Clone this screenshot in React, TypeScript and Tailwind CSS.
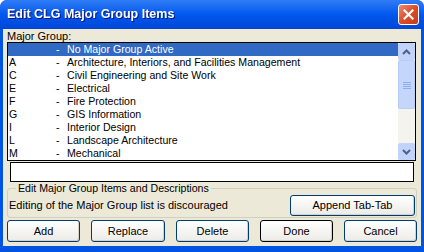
const rows: [string, string][] = [
  ["", "No Major Group Active"],
  ["A", "Architecture, Interiors, and Facilities Management"],
  ["C", "Civil Engineering and Site Work"],
  ["E", "Electrical"],
  ["F", "Fire Protection"],
  ["G", "GIS Information"],
  ["I", "Interior Design"],
  ["L", "Landscape Architecture"],
  ["M", "Mechanical"],
];

const ui = { fontFamily: '"Liberation Sans", Arial, sans-serif' };

function XpButton({ label, className = "", def = false }: { label: string; className?: string; def?: boolean }) {
  return (
    <button
      className={`rounded-[3px] border ${def ? "border-black" : "border-[#003C74]"} bg-gradient-to-b from-white to-[#ECEBE6] text-[11px] text-black shadow-[inset_-1px_-1px_0_#D6D0C5] ${className}`}
      style={ui}
    >
      {label}
    </button>
  );
}

export default function App() {
  return (
    <div className="w-[424px] h-[252px] flex flex-col bg-[#0054E3] rounded-t-[7px] overflow-hidden" style={ui}>
      {/* Title bar */}
      <div className="h-[29px] flex items-center justify-between pl-[7px] pr-[5px] bg-gradient-to-b from-[#2F7CF5] via-[#0058EE] to-[#0046D6]">
        <span className="text-white font-bold text-[12.5px] drop-shadow-[1px_1px_0_#0A1883]">
          Edit CLG Major Group Items
        </span>
        <div className="w-[21px] h-[21px] rounded-[3px] border border-white bg-gradient-to-br from-[#EC8A70] via-[#DE4B24] to-[#C43C1C] flex items-center justify-center">
          <svg width="11" height="11" viewBox="0 0 11 11">
            <path d="M1.5 1.5 L9.5 9.5 M9.5 1.5 L1.5 9.5" stroke="white" strokeWidth="2.2" strokeLinecap="square" />
          </svg>
        </div>
      </div>

      {/* Client area */}
      <div className="flex-1 mx-[3px] mb-[6px] bg-[#ECE9D8] px-[4px] flex flex-col text-[11px] text-black">
        <div className="h-[12px] leading-[12px] mt-[1px]">Major Group:</div>

        {/* List box */}
        <div className="h-[119px] border border-black bg-white flex mr-[1px]">
          <div className="flex-1 flex flex-col text-[10.6px]">
            {rows.map(([code, desc], i) => (
              <div
                key={i}
                className={`h-[13px] leading-[13px] flex ${i === 0 ? "bg-[#316AC5] text-white" : ""}`}
              >
                <span className="w-[48px] pl-[1px]">{code}</span>
                <span className="w-[11px]">-</span>
                <span>{desc}</span>
              </div>
            ))}
          </div>
          {/* Scrollbar */}
          <div className="w-[17px] bg-[#F4F3EE] flex flex-col">
            <div className="h-[17px] rounded-[2px] border border-[#C3D3FD] bg-[#C1D3FB] flex items-center justify-center">
              <svg width="9" height="6" viewBox="0 0 9 6">
                <path d="M1 5 L4.5 1.5 L8 5" stroke="#4D6185" strokeWidth="2" fill="none" />
              </svg>
            </div>
            <div className="h-[49px] rounded-[2px] border border-[#B8CCF8] bg-[#C4D6FC] flex items-center justify-center">
              <svg width="8" height="8" viewBox="0 0 8 8">
                <path d="M0 1.5 H8 M0 3.5 H8 M0 5.5 H8 M0 7.5 H8" stroke="#8EADF0" strokeWidth="1" />
              </svg>
            </div>
            <div className="flex-1" />
            <div className="h-[17px] rounded-[2px] border border-[#C3D3FD] bg-[#C1D3FB] flex items-center justify-center">
              <svg width="9" height="6" viewBox="0 0 9 6">
                <path d="M1 1 L4.5 4.5 L8 1" stroke="#4D6185" strokeWidth="2" fill="none" />
              </svg>
            </div>
          </div>
        </div>

        {/* Edit field */}
        <div className="h-[20px] mt-[1px] ml-[3px] mr-[3px] border border-black bg-white" />

        {/* Group box */}
        <div className="relative mt-[6px] h-[30px] border border-[#D0D0BF] rounded-[3px] flex items-end justify-between pl-[1px] pr-[1px] pb-[1px]">
          <span className="absolute -top-[7px] left-[8px] bg-[#ECE9D8] px-[2px] leading-[13px] text-[10.6px]">
            Edit Major Group Items and Descriptions
          </span>
          <span className="mb-[3px]">Editing of the Major Group list is discouraged</span>
          <XpButton label="Append Tab-Tab" className="w-[125px] h-[21px]" />
        </div>

        {/* Buttons */}
        <div className="flex justify-between mt-[2px]">
          <XpButton label="Add" className="w-[73px] h-[22px]" />
          <XpButton label="Replace" className="w-[74px] h-[22px]" />
          <XpButton label="Delete" className="w-[73px] h-[22px]" />
          <XpButton label="Done" className="w-[73px] h-[22px]" def />
          <XpButton label="Cancel" className="w-[73px] h-[22px]" />
        </div>
      </div>
    </div>
  );
}
